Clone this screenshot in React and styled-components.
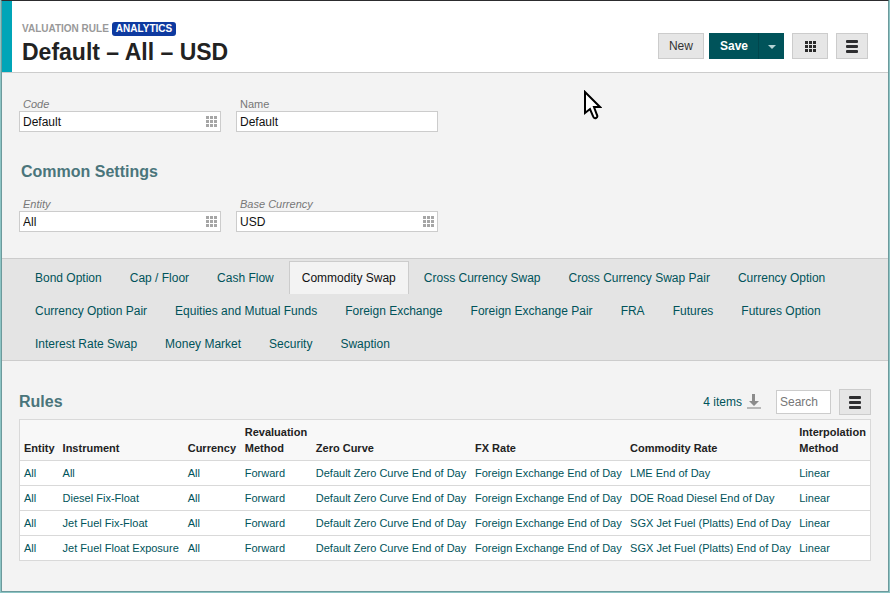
import React from "react";
import styled, { createGlobalStyle } from "styled-components";

const color = {
  link: "#00535a",
  line: "#cccccc",
  tableLine: "#d9d9d9",
  page: "#f3f3f3",
  control: "#e6e6e6",
  text: "#222222",
  heading: "#4a757b",
  muted: "#777777",
};

const GlobalStyle = createGlobalStyle`
  * { box-sizing: border-box; }
  html, body, #root { height: 100%; }
  body {
    margin: 0;
    font: 12px/16px "Liberation Sans", Arial, sans-serif;
    color: ${color.text};
  }
  button, input { font: inherit; color: inherit; }
`;

const Frame = styled.div`
  display: flex;
  flex-direction: column;
  min-height: 100%;
  position: relative;
  border: solid #8cc4c4;
  border-width: 0 1px 1px;
`;

const Window = styled.div`
  flex: 1;
  display: flex;
  flex-direction: column;
  background: ${color.page};
  border: 1px solid #6c9a9c;
  border-top-color: #2c2c2e;
`;

const Header = styled.header`
  display: flex;
  justify-content: space-between;
  align-items: flex-start;
  padding: 21px 20px 6px;
  background: #ffffff;
  box-shadow: inset 10px 0 #00a5b8;
  border-bottom: 1px solid ${color.line};
`;

const Eyebrow = styled.div`
  display: flex;
  align-items: center;
  gap: 3px;
  font-size: 10px;
  line-height: 14px;
  font-weight: bold;
  color: #999999;
`;

const Badge = styled.span`
  padding: 0 4px;
  border-radius: 3px;
  background: #0e3aa0;
  color: #ffffff;
`;

const Title = styled.h1`
  margin: 2px 0 0;
  font-size: 23px;
  line-height: 28px;
  white-space: nowrap;
`;

const Actions = styled.div`
  display: flex;
  gap: 8px;
  padding-top: 11px;
`;

const SaveActions = styled.div`
  display: flex;
  gap: 5px;
`;

const Button = styled.button`
  display: flex;
  align-items: center;
  justify-content: center;
  height: 26px;
  min-width: ${(p) => (p.$wide ? "36px" : "32px")};
  padding: ${(p) => (p.$text ? "0 10px" : "0")};
  border: 1px solid ${color.line};
  background: ${color.control};
  color: #333333;
`;

const SplitButton = styled.div`
  display: flex;
  height: 26px;
  background: #00535a;
`;

const SaveButton = styled.button`
  padding: 0 10px 0 11px;
  border: 0;
  background: none;
  color: #ffffff;
  font-weight: bold;
`;

const SaveMenuButton = styled.button`
  display: flex;
  align-items: center;
  justify-content: center;
  width: 26px;
  padding: 2px 0 0;
  border: 0;
  border-left: 1px solid #00464d;
  background: none;
`;

const Form = styled.section`
  padding: 25px 17px 26px;
`;

const FieldRow = styled.div`
  display: grid;
  grid-template-columns: repeat(2, minmax(0, 202px));
  gap: 15px;
`;

const Label = styled.label`
  display: block;
  padding-left: 4px;
  font-size: 11px;
  line-height: 13px;
  font-style: ${(p) => (p.$reference ? "italic" : "normal")};
  color: ${color.muted};
`;

const Control = styled.div`
  display: flex;
  align-items: center;
  height: 21px;
  background: #ffffff;
  border: 1px solid ${color.line};
`;

const TextInput = styled.input`
  flex: 1;
  min-width: 0;
  height: 19px;
  padding: 0 3px;
  border: 0;
  background: none;
  color: #111111;
`;

const PickButton = styled.button`
  display: flex;
  padding: 0 3px;
  border: 0;
  background: none;
`;

const Heading = styled.h2`
  margin: 0;
  font-size: 16px;
  line-height: 20px;
  color: ${color.heading};
`;

const SettingsHeading = styled(Heading)`
  margin: 30px 2px 16px;
`;

const Tabs = styled.div`
  display: flex;
  flex-wrap: wrap;
  gap: 0 2px;
  padding: 2px 20px 0;
  background: #e4e4e4;
  border: solid ${color.line};
  border-width: 1px 0;
`;

const Tab = styled.button`
  height: 33px;
  padding: 0 12px;
  border: solid ${(p) => (p.$active ? color.line : "transparent")};
  border-width: 1px 1px 0;
  background: ${(p) => (p.$active ? color.page : "none")};
  color: ${(p) => (p.$active ? "#111111" : color.link)};
`;

const Rules = styled.section`
  padding: 28px 17px 30px;
`;

const RulesBar = styled.div`
  display: flex;
  align-items: center;
  justify-content: space-between;
  margin-bottom: 4px;
`;

const RulesTools = styled.div`
  display: flex;
  align-items: center;
  gap: 8px;
`;

const Download = styled.a`
  display: flex;
  align-items: center;
  gap: 5px;
  margin-right: 7px;
  color: ${color.link};
  text-decoration: none;
`;

const Search = styled.input`
  width: 55px;
  height: 24px;
  padding: 0 3px;
  border: 1px solid ${color.line};
  background: #ffffff;
  &::placeholder { color: ${color.muted}; opacity: 1; }
`;

const Table = styled.table`
  width: 100%;
  border-collapse: collapse;
  border: 1px solid ${color.tableLine};
  background: #ffffff;
  font-size: 11px;
`;

const Column = styled.col`
  width: ${(p) => p.$width}px;
`;

const HeadCell = styled.th`
  padding: 4px;
  vertical-align: bottom;
  text-align: left;
  background: #f8f8f8;
`;

const Cell = styled.td`
  padding: 4px;
  border-top: 1px solid ${color.tableLine};
  white-space: nowrap;
`;

const CellLink = styled.a`
  color: ${color.link};
  text-decoration: none;
`;

const Pointer = styled.svg`
  position: absolute;
  left: 582px;
  top: 90px;
  pointer-events: none;
`;

function GridIcon({ fill = "#2a2a2a" }) {
  const steps = [0, 4, 8];
  return (
    <svg width="11" height="11" fill={fill} aria-hidden="true" shapeRendering="crispEdges">
      {steps.map((y) => steps.map((x) => <rect key={`${x}-${y}`} x={x} y={y} width="3" height="3" />))}
    </svg>
  );
}

function MenuIcon() {
  return (
    <svg width="12" height="13" fill="#2e2e30" aria-hidden="true">
      <rect y="0" width="12" height="3" rx="1" />
      <rect y="5" width="12" height="3" rx="1" />
      <rect y="10" width="12" height="3" rx="1" />
    </svg>
  );
}

function Field({ id, label, value, reference }) {
  return (
    <div>
      <Label htmlFor={id} $reference={reference}>{label}</Label>
      <Control>
        <TextInput id={id} defaultValue={value} />
        {reference && (
          <PickButton type="button" aria-label={`Choose ${label}`}>
            <GridIcon fill="#a6a6a6" />
          </PickButton>
        )}
      </Control>
    </div>
  );
}

const tabs = [
  "Bond Option", "Cap / Floor", "Cash Flow", "Commodity Swap", "Cross Currency Swap",
  "Cross Currency Swap Pair", "Currency Option", "Currency Option Pair",
  "Equities and Mutual Funds", "Foreign Exchange", "Foreign Exchange Pair", "FRA",
  "Futures", "Futures Option", "Interest Rate Swap", "Money Market", "Security", "Swaption",
];

const columns = [
  { name: "Entity", width: 39 },
  { name: "Instrument", width: 125 },
  { name: "Currency", width: 57 },
  { name: "Revaluation Method", width: 71 },
  { name: "Zero Curve", width: 159 },
  { name: "FX Rate", width: 155 },
  { name: "Commodity Rate", width: 169 },
  { name: "Interpolation Method", width: 75 },
];

const rules = [
  ["All", "LME End of Day"],
  ["Diesel Fix-Float", "DOE Road Diesel End of Day"],
  ["Jet Fuel Fix-Float", "SGX Jet Fuel (Platts) End of Day"],
  ["Jet Fuel Float Exposure", "SGX Jet Fuel (Platts) End of Day"],
].map(([instrument, rate]) => [
  "All", instrument, "All", "Forward", "Default Zero Curve End of Day", "Foreign Exchange End of Day", rate, "Linear",
]);

export default function App() {
  const [active, setActive] = React.useState("Commodity Swap");
  return (
    <Frame>
      <GlobalStyle />
      <Window>
        <Header>
          <div>
            <Eyebrow>VALUATION RULE <Badge>ANALYTICS</Badge></Eyebrow>
            <Title>Default – All – USD</Title>
          </div>
          <Actions>
            <SaveActions>
              <Button type="button" $text>New</Button>
              <SplitButton>
                <SaveButton type="button">Save</SaveButton>
                <SaveMenuButton type="button" aria-label="More save options">
                  <svg width="8" height="4" aria-hidden="true"><path d="M0 0h8L4 4z" fill="#b5d3d5" /></svg>
                </SaveMenuButton>
              </SplitButton>
            </SaveActions>
            <Button type="button" $wide aria-label="Apps"><GridIcon /></Button>
            <Button type="button" aria-label="Menu"><MenuIcon /></Button>
          </Actions>
        </Header>
        <Form>
          <FieldRow>
            <Field id="code" label="Code" value="Default" reference />
            <Field id="name" label="Name" value="Default" />
          </FieldRow>
          <SettingsHeading>Common Settings</SettingsHeading>
          <FieldRow>
            <Field id="entity" label="Entity" value="All" reference />
            <Field id="currency" label="Base Currency" value="USD" reference />
          </FieldRow>
        </Form>
        <Tabs role="tablist">
          {tabs.map((name) => (
            <Tab key={name} type="button" role="tab" aria-selected={name === active} $active={name === active} onClick={() => setActive(name)}>
              {name}
            </Tab>
          ))}
        </Tabs>
        <Rules>
          <RulesBar>
            <Heading>Rules</Heading>
            <RulesTools>
              <Download href="#download">
                4 items
                <svg width="14" height="16" aria-hidden="true">
                  <path d="M5 0h3v7h4l-5 5-5-5h3z" fill="#8c8c8c" />
                  <path d="M0 13h14v2H0z" fill="#b8b8b8" />
                </svg>
              </Download>
              <Search type="text" placeholder="Search" aria-label="Search rules" />
              <Button type="button" aria-label="Rules menu"><MenuIcon /></Button>
            </RulesTools>
          </RulesBar>
          <Table>
            <colgroup>
              {columns.map((c) => <Column key={c.name} $width={c.width} />)}
            </colgroup>
            <thead>
              <tr>{columns.map((c) => <HeadCell key={c.name} scope="col">{c.name}</HeadCell>)}</tr>
            </thead>
            <tbody>
              {rules.map((row) => (
                <tr key={row[1]}>
                  {row.map((v, i) => <Cell key={i}><CellLink href="#rule">{v}</CellLink></Cell>)}
                </tr>
              ))}
            </tbody>
          </Table>
        </Rules>
      </Window>
      <Pointer width="19" height="31" viewBox="0 0 19 31" aria-hidden="true">
        <path d="M2 2v21l5-4 3 7q1 3 3 2t1-3l-3-8h6z" fill="#fff" stroke="#000" strokeWidth="2" />
      </Pointer>
    </Frame>
  );
}
